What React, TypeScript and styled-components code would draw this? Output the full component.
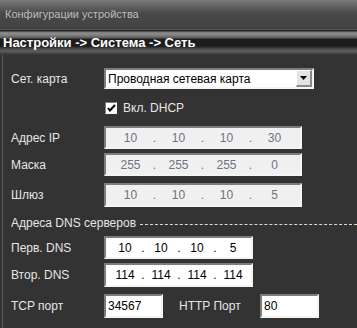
import styled, { createGlobalStyle } from "styled-components";

const Global = createGlobalStyle`
  html, body {
    margin: 0;
    padding: 0;
    background: #333333;
  }
`;

const Window = styled.div`
  width: 357px;
  height: 328px;
  overflow: hidden;
  background: #333333;
  font-family: "Liberation Sans", Arial, sans-serif;
  display: flex;
  flex-direction: column;
`;

const TitleBar = styled.div`
  height: 27px;
  flex-shrink: 0;
  display: flex;
  align-items: center;
  padding-left: 5px;
  color: #bdbdbd;
  font-size: 11px;
  background: linear-gradient(#7a7a7a 0px, #5c5c5c 8px, #484848 14px, #444444 27px);
`;

const HeaderBand = styled.div`
  height: 28px;
  flex-shrink: 0;
  display: flex;
  align-items: center;
  padding: 2px 0 0 3px;
  box-sizing: border-box;
  color: #ffffff;
  font-weight: bold;
  font-size: 13px;
  background: linear-gradient(
    #3d3d3d 0px,
    #3d3d3d 2px,
    #555555 2px,
    #555555 3px,
    #222222 3px,
    #222222 4px,
    #7a7a7a 5px,
    #8e8e8e 7px,
    #5a5a5a 11px,
    #1e1e1e 12px,
    #1c1c1c 19px,
    #4a4a4a 22px,
    #5e5e5e 24px,
    #4a4a4a 26px,
    #333333 28px
  );
`;

const Body = styled.div`
  flex: 1;
  margin-left: 2px;
  border-left: 1px solid #5a5a5a;
  padding: 13px 0 0 8px;
  display: flex;
  flex-direction: column;
`;

const Row = styled.div<{ $top?: number; $h?: number }>`
  display: flex;
  align-items: center;
  margin-top: ${(p) => p.$top ?? 0}px;
  height: ${(p) => p.$h ?? 23}px;
`;

const Label = styled.div<{ $w?: number; $indent?: number }>`
  width: ${(p) => p.$w ?? 93}px;
  padding-left: ${(p) => p.$indent ?? 0}px;
  box-sizing: border-box;
  flex-shrink: 0;
  color: #e6e6e6;
  font-size: 12px;
`;

const Sunken = styled.div<{ $w: number; $bg?: string; $pad?: number }>`
  width: ${(p) => p.$w}px;
  height: 100%;
  box-sizing: border-box;
  padding-left: ${(p) => p.$pad ?? 0}px;
  border-top: 2px solid #7d7d7d;
  border-left: 2px solid #7d7d7d;
  border-right: 2px solid #f4f4f4;
  border-bottom: 2px solid #f4f4f4;
  background: ${(p) => p.$bg ?? "#ffffff"};
  display: flex;
  align-items: center;
  font-size: 12px;
  color: #000000;
`;

const SelectText = styled.div`
  flex: 1;
  padding-left: 2px;
`;

const ArrowButton = styled.div`
  width: 16px;
  height: 17px;
  box-sizing: border-box;
  background: #e4e4e4;
  border-top: 1px solid #ffffff;
  border-left: 1px solid #ffffff;
  border-right: 2px solid #8a8a8a;
  border-bottom: 2px solid #8a8a8a;
  display: flex;
  align-items: center;
  justify-content: center;
`;

const CheckBox = styled.div`
  width: 12px;
  height: 12px;
  box-sizing: border-box;
  border-top: 1px solid #7d7d7d;
  border-left: 1px solid #7d7d7d;
  border-right: 1px solid #f4f4f4;
  border-bottom: 1px solid #f4f4f4;
  background: #ffffff;
  margin-left: 1px;
  display: flex;
  align-items: center;
  justify-content: center;
`;

const CheckLabel = styled.div`
  color: #e6e6e6;
  font-size: 12px;
  margin-left: 6px;
`;

const Octet = styled.div<{ $w: number; $muted?: boolean }>`
  width: ${(p) => p.$w}px;
  text-align: center;
  color: ${(p) => (p.$muted ? "#6e7480" : "#000000")};
`;

const SectionTitle = styled.div`
  margin-top: 9px;
  height: 14px;
  display: flex;
  align-items: center;
  color: #e6e6e6;
  font-size: 12px;
  white-space: nowrap;
  overflow: hidden;
`;

const DashLine = styled.div`
  flex: 1;
  margin-left: 4px;
  margin-top: 2px;
  border-top: 1px dashed #e8d8c0;
`;

function IpField({ values, width, cell, dot, disabled }: {
  values: string[];
  width: number;
  cell: number;
  dot: number;
  disabled?: boolean;
}) {
  const parts: JSX.Element[] = [];
  values.forEach((v, i) => {
    if (i > 0) {
      parts.push(
        <Octet key={"d" + i} $w={dot} $muted={disabled}>
          .
        </Octet>
      );
    }
    parts.push(
      <Octet key={"o" + i} $w={cell} $muted={disabled}>
        {v}
      </Octet>
    );
  });
  return (
    <Sunken $w={width} $bg={disabled ? "#f0f0f0" : "#ffffff"} $pad={5}>
      {parts}
    </Sunken>
  );
}

export default function App() {
  return (
    <Window>
      <Global />
      <TitleBar>Конфигурации устройства</TitleBar>
      <HeaderBand>Настройки -&gt; Система -&gt; Сеть</HeaderBand>
      <Body>
        <Row $h={21}>
          <Label>Сет. карта</Label>
          <Sunken $w={210}>
            <SelectText>Проводная сетевая карта</SelectText>
            <ArrowButton>
              <svg width="7" height="4" viewBox="0 0 7 4">
                <path d="M0 0h7L3.5 4z" fill="#000" />
              </svg>
            </ArrowButton>
          </Sunken>
        </Row>
        <Row $top={12} $h={14}>
          <Label />
          <CheckBox>
            <svg width="9" height="8" viewBox="0 0 9 8">
              <path d="M1 4l2 2.5L8 1" stroke="#000" strokeWidth="2" fill="none" />
            </svg>
          </CheckBox>
          <CheckLabel>Вкл. DHCP</CheckLabel>
        </Row>
        <Row $top={11}>
          <Label>Адрес IP</Label>
          <IpField values={["10", "10", "10", "30"]} width={198} cell={39} dot={9} disabled />
        </Row>
        <Row $top={4}>
          <Label>Маска</Label>
          <IpField values={["255", "255", "255", "0"]} width={198} cell={39} dot={9} disabled />
        </Row>
        <Row $top={7} $h={24}>
          <Label>Шлюз</Label>
          <IpField values={["10", "10", "10", "5"]} width={198} cell={39} dot={9} disabled />
        </Row>
        <SectionTitle>
          Адреса DNS серверов
          <DashLine />
        </SectionTitle>
        <Row $top={6}>
          <Label>Перв. DNS</Label>
          <IpField values={["10", "10", "10", "5"]} width={149} cell={28} dot={8} />
        </Row>
        <Row $top={4} $h={24}>
          <Label>Втор. DNS</Label>
          <IpField values={["114", "114", "114", "114"]} width={149} cell={28} dot={8} />
        </Row>
        <Row $top={7} $h={24}>
          <Label>TCP порт</Label>
          <Sunken $w={59} $pad={2}>34567</Sunken>
          <Label $w={97} $indent={16}>
            HTTP Порт
          </Label>
          <Sunken $w={59} $pad={2}>80</Sunken>
        </Row>
      </Body>
    </Window>
  );
}
